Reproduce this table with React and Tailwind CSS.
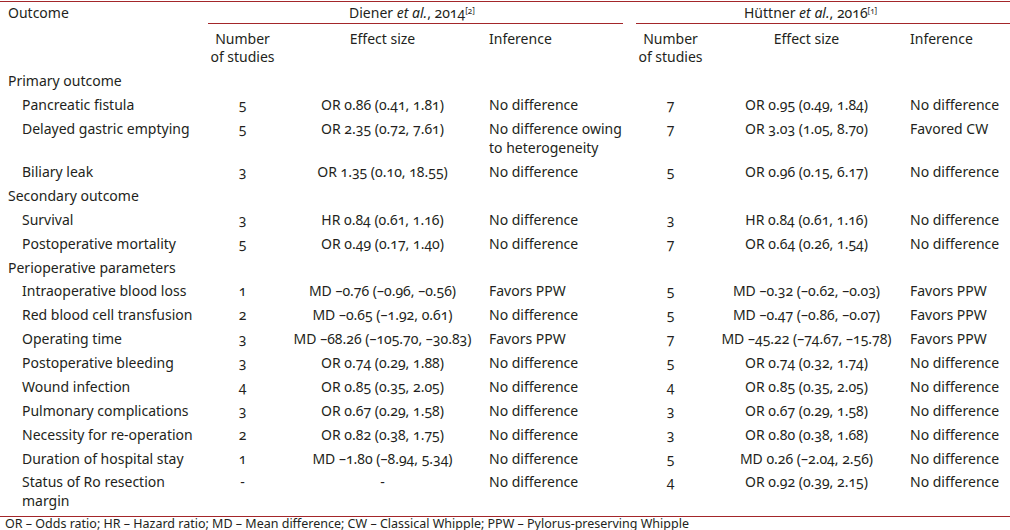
import React from "react";

const rows = [
  { type: "section", label: "Primary outcome" },
  { label: "Pancreatic fistula", n1: "5", e1: "OR 0.86 (0.41, 1.81)", i1: "No difference", n2: "7", e2: "OR 0.95 (0.49, 1.84)", i2: "No difference" },
  { label: "Delayed gastric emptying", n1: "5", e1: "OR 2.35 (0.72, 7.61)", i1: "No difference owing to heterogeneity", n2: "7", e2: "OR 3.03 (1.05, 8.70)", i2: "Favored CW" },
  { label: "Biliary leak", n1: "3", e1: "OR 1.35 (0.10, 18.55)", i1: "No difference", n2: "5", e2: "OR 0.96 (0.15, 6.17)", i2: "No difference" },
  { type: "section", label: "Secondary outcome" },
  { label: "Survival", n1: "3", e1: "HR 0.84 (0.61, 1.16)", i1: "No difference", n2: "3", e2: "HR 0.84 (0.61, 1.16)", i2: "No difference" },
  { label: "Postoperative mortality", n1: "5", e1: "OR 0.49 (0.17, 1.40)", i1: "No difference", n2: "7", e2: "OR 0.64 (0.26, 1.54)", i2: "No difference" },
  { type: "section", label: "Perioperative parameters" },
  { label: "Intraoperative blood loss", n1: "1", e1: "MD –0.76 (–0.96, –0.56)", i1: "Favors PPW", n2: "5", e2: "MD –0.32 (–0.62, –0.03)", i2: "Favors PPW" },
  { label: "Red blood cell transfusion", n1: "2", e1: "MD –0.65 (–1.92, 0.61)", i1: "No difference", n2: "5", e2: "MD –0.47 (–0.86, –0.07)", i2: "Favors PPW" },
  { label: "Operating time", n1: "3", e1: "MD –68.26 (–105.70, –30.83)", i1: "Favors PPW", n2: "7", e2: "MD –45.22 (–74.67, –15.78)", i2: "Favors PPW" },
  { label: "Postoperative bleeding", n1: "3", e1: "OR 0.74 (0.29, 1.88)", i1: "No difference", n2: "5", e2: "OR 0.74 (0.32, 1.74)", i2: "No difference" },
  { label: "Wound infection", n1: "4", e1: "OR 0.85 (0.35, 2.05)", i1: "No difference", n2: "4", e2: "OR 0.85 (0.35, 2.05)", i2: "No difference" },
  { label: "Pulmonary complications", n1: "3", e1: "OR 0.67 (0.29, 1.58)", i1: "No difference", n2: "3", e2: "OR 0.67 (0.29, 1.58)", i2: "No difference" },
  { label: "Necessity for re-operation", n1: "2", e1: "OR 0.82 (0.38, 1.75)", i1: "No difference", n2: "3", e2: "OR 0.80 (0.38, 1.68)", i2: "No difference" },
  { label: "Duration of hospital stay", n1: "1", e1: "MD –1.80 (–8.94, 5.34)", i1: "No difference", n2: "5", e2: "MD 0.26 (–2.04, 2.56)", i2: "No difference" },
  { label: "Status of Ro resection margin", n1: "-", e1: "-", i1: "No difference", n2: "4", e2: "OR 0.92 (0.39, 2.15)", i2: "No difference", narrow: true },
];

const grid = "grid grid-cols-[205px_75px_205px_151px_69px_203px_102px]";

function Row({ r }) {
  if (r.type === "section") {
    return (
      <div className={grid}>
        <div className="col-span-7 pl-[8px] py-[2.45px]">{r.label}</div>
      </div>
    );
  }
  return (
    <div className={grid + " py-[2.45px]"}>
      <div className={"pl-[22px] " + (r.narrow ? "pr-[30px]" : "pr-[2px]")}>{r.label}</div>
      <div className="text-center">{r.n1}</div>
      <div className="text-center whitespace-nowrap">{r.e1}</div>
      <div className="pl-[4px] pr-[8px]">{r.i1}</div>
      <div className="text-center">{r.n2}</div>
      <div className="text-center whitespace-nowrap">{r.e2}</div>
      <div className="pl-[2px] whitespace-nowrap">{r.i2}</div>
    </div>
  );
}

export default function App() {
  return (
    <div
      className="w-[1010px] h-[530px] overflow-hidden bg-white text-[#231f20] text-[14px] leading-[19px] oldstyle-nums"
      style={{ fontFamily: '"Noto Sans", "Open Sans", sans-serif' }}
    >
      <div className="border-t-[1.5px] border-[#a3262a] mt-[1px]">
        <div className={grid}>
          <div className="pl-[8px] pt-[1px]">Outcome</div>
          <div className="col-span-3 ml-[3px] mr-[13px] border-b border-[#a3262a] text-left pl-[141px] pt-[1px] pb-[1px] whitespace-nowrap">
            Diener <i>et al.</i>, 2014<sup className="text-[8px]">[2]</sup>
          </div>
          <div className="col-span-3 border-b border-[#a3262a] text-left pl-[108px] pt-[1px] pb-[1px] whitespace-nowrap">
            Hüttner <i>et al.</i>, 2016<sup className="text-[8px]">[1]</sup>
          </div>
        </div>
        <div className={grid + " leading-[18px] pt-[6px] pb-[3px]"}>
          <div></div>
          <div className="text-center">
            Number
            <br />
            of studies
          </div>
          <div className="text-center">Effect size</div>
          <div className="pl-[4px]">Inference</div>
          <div className="text-center">
            Number
            <br />
            of studies
          </div>
          <div className="text-center">Effect size</div>
          <div className="pl-[2px]">Inference</div>
        </div>
        {rows.map((r, i) => (
          <Row key={i} r={r} />
        ))}
        <div className="border-t-[1.5px] border-[#a3262a] mt-[3px] pl-[5px] text-[12.5px] leading-[14px] whitespace-nowrap">
          OR – Odds ratio; HR – Hazard ratio; MD – Mean difference; CW – Classical Whipple; PPW – Pylorus-preserving Whipple
        </div>
      </div>
    </div>
  );
}
